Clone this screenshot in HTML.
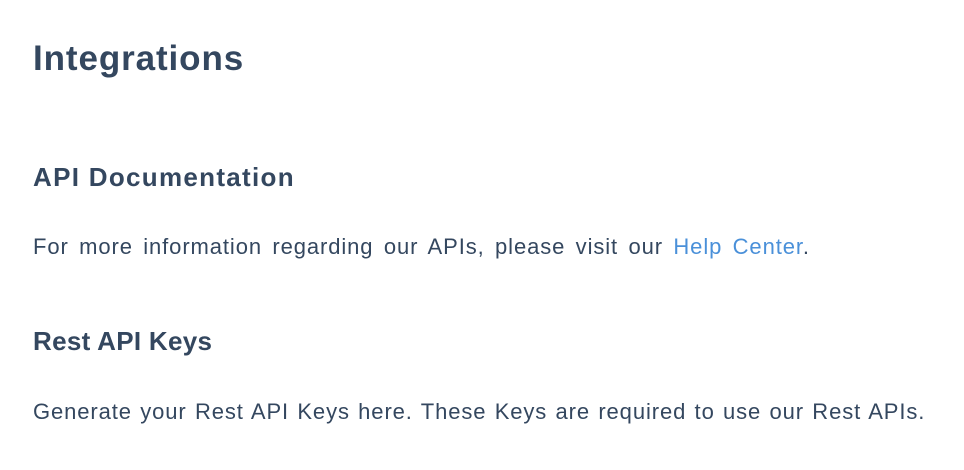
<!DOCTYPE html>
<html><head><meta charset="utf-8"><style>
html,body{margin:0;padding:0;background:#fff;width:964px;height:470px;overflow:hidden}
body{font-family:"Liberation Sans",sans-serif;color:#34475f;position:relative}
.t{position:absolute;left:33px;white-space:nowrap;line-height:1}
h1,h2{margin:0;font-weight:bold}
a{color:#4a90d9;text-decoration:none}
</style></head><body>
<h1 class="t" style="top:41px;font-size:35px;letter-spacing:0.9px">Integrations</h1>
<h2 class="t" style="top:164px;font-size:26px;letter-spacing:1.3px">API Documentation</h2>
<div class="t" style="top:236px;font-size:22px;letter-spacing:0.9px;word-spacing:3.4px">For more information regarding our APIs, please visit our <a>Help Center</a>.</div>
<h2 class="t" style="top:328px;font-size:26px;letter-spacing:0.3px">Rest API Keys</h2>
<div class="t" style="top:401px;font-size:22px;letter-spacing:0.9px;word-spacing:1.3px">Generate your Rest API Keys here. These Keys are required to use our Rest APIs.</div>
</body></html>
